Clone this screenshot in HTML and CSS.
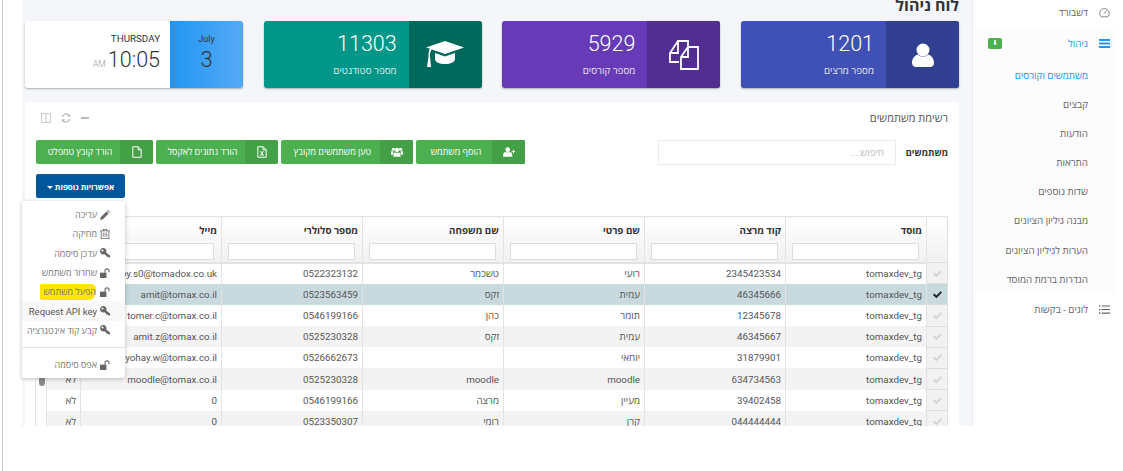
FILE: index.html
```html
<!DOCTYPE html>
<html lang="he" dir="rtl">
<head>
    <meta charset="UTF-8">
    <title>לוח ניהול</title>
    <link rel="stylesheet" href="styles.css">
</head>
<body>
    <svg class="icon-defs" width="0" height="0">
        <symbol id="i-user" viewBox="0 0 24 24"><circle cx="12" cy="7" r="6.5"/><path d="M7 11.500c2.500 3 7.500 3 10 0 3.500 1 6 4 6 8.500 0 2.500-2 4-4 4H5c-2 0-4-1.500-4-4 0-4.500 2.500-7.500 6-8.500z"/></symbol>
        <symbol id="i-copy" viewBox="0 0 30 30"><path d="M10 22H1V13L9 1h10v6M9 1v12H1M12 17l7-10h10v22H12zM19 7v10h-7" fill="none" stroke="currentColor" stroke-width="1.800"/></symbol>
        <symbol id="i-cap" viewBox="0 0 40 27"><path d="M20 0l19 6.500-19 6.500-13-4.500c-1.500 1-2 3-2 5.500v1.500l1 10.500H2l1.500-10.500V14c0-3 .5-5 1.500-6.200L1 6.500z"/><path d="M10 12l10 3.500L30 12v6c0 3-4.500 5-10 5s-10-2-10-5z"/></symbol>
        <symbol id="i-pencil" viewBox="0 0 14 14"><path d="M0 14l1-4 8-8 3 3-8 8zM10 1l1-1 3 3-1 1z"/></symbol>
        <symbol id="i-trash" viewBox="0 0 14 14"><path d="M4.500 0h5l1 2H14v1.200h-1V14H1V3.200H0V2h3.500zM5 2h4l-.4-.8H5.400zM2.200 3.200v9.600h9.600V3.200zM4 5h1v6H4zM6.500 5h1v6h-1zM9 5h1v6H9z"/></symbol>
        <symbol id="i-key" viewBox="0 0 14 14"><path fill-rule="evenodd" d="M4.500 0a4.500 4.500 0 0 1 4.200 6.200L14 10.500V13l-1 .5-1.300-1-.8.500-.9-1.200-.9.200-.4-1.300-2.300-2.100A4.500 4.500 0 1 1 4.500 0zM3.500 2a1.500 1.500 0 1 0 0 3 1.500 1.500 0 0 0 0-3z"/></symbol>
        <symbol id="i-unlock" viewBox="0 0 14 14"><path d="M0 6.500h9V14H0z"/><path d="M7 6.500V4a2.800 2.800 0 0 1 5.600 0v2" fill="none" stroke="currentColor" stroke-width="1.500"/></symbol>
        <symbol id="i-check" viewBox="0 0 14 12"><path d="M1 6.500l1.800-1.800 2.700 2.700L11.200 1.500 13 3.300 5.500 11z"/></symbol>
        <symbol id="i-file" viewBox="0 0 12 14"><path d="M1 .7h6.500L11 4.200v9.100H1zM7.300.7v3.700H11" fill="none" stroke="currentColor" stroke-width="1.200"/></symbol>
        <symbol id="i-excel" viewBox="0 0 12 14"><path d="M1 .7h6.500L11 4.200v9.100H1zM7.300.7v3.700H11" fill="none" stroke="currentColor" stroke-width="1.200"/><path d="M3.500 6h1.600L6 7.500 6.900 6h1.600L6.800 8.500l1.800 3H7L6 9.700l-1 1.800H3.400l1.800-3z"/></symbol>
        <symbol id="i-users" viewBox="0 0 18 14"><circle cx="9" cy="4" r="3.200"/><circle cx="3.500" cy="3" r="2.300"/><circle cx="14.500" cy="3" r="2.300"/><path d="M4.500 8h9l1 6h-11zM0 6h3.500v5H0zM14.500 6H18v5h-3.500z"/></symbol>
        <symbol id="i-user-plus" viewBox="0 0 18 14"><circle cx="7" cy="3.500" r="3.500"/><path d="M2 7.500h10c1.500 1 2 3 2 6.500H0c0-3.500.5-5.500 2-6.500z"/><path d="M13 5.500h2v-2h1.500v2H18V7h-1.500v2H15V7h-2z"/></symbol>
        <symbol id="i-columns" viewBox="0 0 12 12"><path d="M.5.500h11v11H.5zM6 .5v11" fill="none" stroke="currentColor"/></symbol>
        <symbol id="i-refresh" viewBox="0 0 12 12"><path d="M1.500 5a4.500 4.500 0 0 1 8-2M10.500 7a4.500 4.500 0 0 1-8 2" fill="none" stroke="currentColor" stroke-width="1.600"/><path d="M11 .5v4H7zM1 11.500v-4h4z"/></symbol>
        <symbol id="i-gauge" viewBox="0 0 14 14"><path d="M3 12.500a6 6 0 1 1 8 0z" fill="none" stroke="currentColor"/><path d="M6.500 8.500l3-4" fill="none" stroke="currentColor"/></symbol>
        <symbol id="i-bars" viewBox="0 0 12 10"><path d="M0 0h12v2.400H0zM0 3.800h12v2.400H0zM0 7.600h12V10H0z"/></symbol>
        <symbol id="i-list" viewBox="0 0 12 10"><path d="M3 .5h9v1.200H3zM3 4.400h9v1.200H3zM3 8.300h9v1.200H3zM0 .3h1.500v1.500H0zM0 4.200h1.500v1.500H0zM0 8.100h1.500v1.500H0z"/></symbol>
    </svg>

    <div class="page">
        <aside class="sidebar">
            <a class="side-item">
                <svg class="side-icon"><use href="#i-gauge"/></svg>
                <span>דשבורד</span>
            </a>
            <div class="side-group">
                <a class="side-item side-item-open">
                    <svg class="side-icon"><use href="#i-bars"/></svg>
                    <span>ניהול</span>
                    <span class="side-badge">⬇</span>
                </a>
                <a class="sub-item sub-item-active">משתמשים וקורסים</a>
                <a class="sub-item">קבצים</a>
                <a class="sub-item">הודעות</a>
                <a class="sub-item">התראות</a>
                <a class="sub-item">שדות נוספים</a>
                <a class="sub-item">מבנה גיליון הציונים</a>
                <a class="sub-item">הערות לגיליון הציונים</a>
                <a class="sub-item">הגדרות ברמת המוסד</a>
            </div>
            <a class="side-item">
                <svg class="side-icon"><use href="#i-list"/></svg>
                <span>לוגים - בקשות</span>
            </a>
        </aside>

        <main class="content">
            <h1 class="page-title">לוח ניהול</h1>

            <section class="stats">
                <div class="stat stat-indigo">
                    <div class="stat-icon"><svg class="icon-user"><use href="#i-user"/></svg></div>
                    <div class="stat-body">
                        <div class="stat-num">1201</div>
                        <div class="stat-label">מספר מרצים</div>
                    </div>
                </div>
                <div class="stat stat-purple">
                    <div class="stat-icon"><svg class="icon-copy"><use href="#i-copy"/></svg></div>
                    <div class="stat-body">
                        <div class="stat-num">5929</div>
                        <div class="stat-label">מספר קורסים</div>
                    </div>
                </div>
                <div class="stat stat-teal">
                    <div class="stat-icon"><svg class="icon-cap"><use href="#i-cap"/></svg></div>
                    <div class="stat-body">
                        <div class="stat-num">11303</div>
                        <div class="stat-label">מספר סטודנטים</div>
                    </div>
                </div>
                <div class="stat stat-date">
                    <div class="date-box">
                        <div class="date-month">July</div>
                        <div class="date-day">3</div>
                    </div>
                    <div class="date-body">
                        <div class="date-weekday">THURSDAY</div>
                        <div class="date-time"><span class="date-ampm">AM</span> 10:05</div>
                    </div>
                </div>
            </section>

            <section class="panel">
                <div class="panel-head">
                    <span class="panel-title">רשימת משתמשים</span>
                    <div class="panel-tools">
                        <span class="tool-minus"></span>
                        <svg class="tool"><use href="#i-refresh"/></svg>
                        <svg class="tool"><use href="#i-columns"/></svg>
                    </div>
                </div>

                <div class="toolbar">
                    <strong class="toolbar-label">משתמשים</strong>
                    <input class="search" type="text" placeholder="חיפוש ...">
                    <div class="actions">
                        <button class="btn btn-add"><span class="btn-icon"><svg class="icon-wide"><use href="#i-user-plus"/></svg></span><span class="btn-text">הוסף משתמש</span></button>
                        <button class="btn btn-load"><span class="btn-icon"><svg class="icon-wide"><use href="#i-users"/></svg></span><span class="btn-text">טען משתמשים מקובץ</span></button>
                        <button class="btn btn-excel"><span class="btn-icon"><svg class="icon-doc"><use href="#i-excel"/></svg></span><span class="btn-text">הורד נתונים לאקסל</span></button>
                        <button class="btn btn-template"><span class="btn-icon"><svg class="icon-doc"><use href="#i-file"/></svg></span><span class="btn-text">הורד קובץ טמפלט</span></button>
                        <button class="btn-more">אפשרויות נוספות <span class="caret"></span></button>
                    </div>
                </div>

                <div class="grid-wrap">
                    <table class="grid">
                        <colgroup>
                            <col class="col-check">
                            <col class="col-wide">
                            <col class="col-wide">
                            <col class="col-wide">
                            <col class="col-wide">
                            <col class="col-wide">
                            <col class="col-wide">
                            <col class="col-flag">
                            <col class="col-scroll">
                        </colgroup>
                        <thead>
                            <tr>
                                <th class="cell-check"></th>
                                <th>מוסד<input type="text"></th>
                                <th>קוד מרצה<input type="text"></th>
                                <th>שם פרטי<input type="text"></th>
                                <th>שם משפחה<input type="text"></th>
                                <th>מספר סלולרי<input type="text"></th>
                                <th>מייל<input type="text"></th>
                                <th></th>
                                <th class="cell-scroll"></th>
                            </tr>
                        </thead>
                        <tbody>
                            <tr>
                                <td class="cell-check"><svg class="check"><use href="#i-check"/></svg></td>
                                <td>tomaxdev_tg</td><td>2345423534</td><td>רועי</td><td>טשכמר</td><td>0522323132</td><td>roy.s0@tomadox.co.uk</td><td>לא</td><td class="cell-scroll"></td>
                            </tr>
                            <tr class="row-selected">
                                <td class="cell-check"><svg class="check"><use href="#i-check"/></svg></td>
                                <td>tomaxdev_tg</td><td>46345666</td><td>עמית</td><td>זקס</td><td>0523563459</td><td>amit@tomax.co.il</td><td>לא</td><td class="cell-scroll"></td>
                            </tr>
                            <tr>
                                <td class="cell-check"><svg class="check"><use href="#i-check"/></svg></td>
                                <td>tomaxdev_tg</td><td>12345678</td><td>תומר</td><td>כהן</td><td>0546199166</td><td>tomer.c@tomax.co.il</td><td>לא</td><td class="cell-scroll"></td>
                            </tr>
                            <tr class="row-alt">
                                <td class="cell-check"><svg class="check"><use href="#i-check"/></svg></td>
                                <td>tomaxdev_tg</td><td>46345667</td><td>עמית</td><td>זקס</td><td>0525230328</td><td>amit.z@tomax.co.il</td><td>לא</td><td class="cell-scroll"></td>
                            </tr>
                            <tr>
                                <td class="cell-check"><svg class="check"><use href="#i-check"/></svg></td>
                                <td>tomaxdev_tg</td><td>31879901</td><td>יוחאי</td><td></td><td>0526662673</td><td>yohay.w@tomax.co.il</td><td>לא</td><td class="cell-scroll"></td>
                            </tr>
                            <tr class="row-alt">
                                <td class="cell-check"><svg class="check"><use href="#i-check"/></svg></td>
                                <td>tomaxdev_tg</td><td>634734563</td><td>moodle</td><td>moodle</td><td>0525230328</td><td>moodle@tomax.co.il</td><td>לא</td><td class="cell-scroll"></td>
                            </tr>
                            <tr>
                                <td class="cell-check"><svg class="check"><use href="#i-check"/></svg></td>
                                <td>tomaxdev_tg</td><td>39402458</td><td>מעיין</td><td>מרצה</td><td>0546199166</td><td>0</td><td>לא</td><td class="cell-scroll"></td>
                            </tr>
                            <tr class="row-alt">
                                <td class="cell-check"><svg class="check"><use href="#i-check"/></svg></td>
                                <td>tomaxdev_tg</td><td>044444444</td><td>קרן</td><td>רומי</td><td>0523350307</td><td>0</td><td>לא</td><td class="cell-scroll"></td>
                            </tr>
                        </tbody>
                    </table>
                    <span class="scroll-thumb"></span>
                </div>
            </section>
        </main>
    </div>

    <!-- תפריט אפשרויות נוספות -->
    <ul class="menu">
        <li class="menu-item"><svg class="menu-icon"><use href="#i-pencil"/></svg><span>עריכה</span></li>
        <li class="menu-item"><svg class="menu-icon"><use href="#i-trash"/></svg><span>מחיקה</span></li>
        <li class="menu-item"><svg class="menu-icon"><use href="#i-key"/></svg><span>עדכן סיסמה</span></li>
        <li class="menu-item"><svg class="menu-icon"><use href="#i-unlock"/></svg><span>שחרור משתמש</span></li>
        <li class="menu-item"><svg class="menu-icon"><use href="#i-unlock"/></svg><span class="marker">הפעל משתמש</span></li>
        <li class="menu-item menu-item-hover"><svg class="menu-icon"><use href="#i-key"/></svg><span>Request API key</span></li>
        <li class="menu-item"><svg class="menu-icon"><use href="#i-key"/></svg><span>קבע קוד אינטגרציה</span></li>
        <li class="menu-divider"></li>
        <li class="menu-item"><svg class="menu-icon"><use href="#i-unlock"/></svg><span>אפס סיסמה</span></li>
    </ul>
</body>
</html>
```

FILE: styles.css
```css
:root {
    --main-bg: #f4f6fa;
    --text-color: #555;
    --border-color: #e3e3e3;
    --green: #4caf50;
    --green-dark: #43a047;
}
* {
    box-sizing: border-box;
}
html, body {
    margin: 0;
    height: 100%;
    overflow: hidden;
}
body {
    background-color: white;
    color: var(--text-color);
    font-family: Roboto, "Open Sans", "Liberation Sans", sans-serif;
    font-size: 9.800px;
}
svg {
    fill: currentColor;
}
.icon-defs {
    position: absolute;
}
.page {
    display: flex;
    height: 471px;
    margin-left: 2px;
    border-left: 1px solid #c6c6c6;
}

/* sidebar */
.sidebar {
    width: 151px;
    height: 426px;
    flex-shrink: 0;
    border-left: 1px solid #e6e8ee;
    padding: 1px 7px 0 0;
}
.side-item {
    display: flex;
    align-items: center;
    height: 23px;
    padding-right: 6px;
    color: #666;
}
.side-item + .side-group {
    margin-top: 5px;
}
.side-group {
    width: 141px;
    height: 264px;
    background-color: #fcfcfc;
    padding-top: 3px;
    margin-bottom: 5px;
}
.side-item-open {
    color: #2196f3;
}
.side-icon {
    width: 11px;
    height: 11px;
    margin-left: 11px;
}
.side-badge {
    width: 14px;
    height: 11px;
    margin-right: auto;
    margin-left: 13px;
    background-color: var(--green);
    border-radius: 2px;
    color: white;
    font-size: 7px;
    line-height: 11px;
    text-align: center;
}
.sub-item {
    display: block;
    height: 29.100px;
    padding-right: 28px;
    line-height: 29px;
    color: #666;
}
.side-item-open + .sub-item {
    margin-top: 6px;
}
.sub-item-active {
    color: #2196f3;
}

/* content */
.content {
    width: 950px;
    height: 426px;
    overflow: hidden;
    background-color: var(--main-bg);
    padding: 0 13px 0 3px;
}
.page-title {
    height: 21px;
    margin: 0;
    color: #333;
    font-size: 16px;
    font-weight: bold;
    line-height: 12px;
}
.stats {
    display: flex;
    justify-content: space-between;
}
.stat {
    display: flex;
    width: 218px;
    height: 67px;
    border-radius: 3px;
    overflow: hidden;
    color: white;
    box-shadow: 0 1px 2px rgba(0, 0, 0, 0.3);
}
.stat-indigo { background-color: #3f51b5; }
.stat-indigo .stat-icon { background-color: #303f8f; }
.stat-purple { background-color: #673ab7; }
.stat-purple .stat-icon { background-color: #512e90; }
.stat-teal { background-color: #009688; }
.stat-teal .stat-icon { background-color: #00695c; }
.stat-icon {
    display: flex;
    align-items: center;
    justify-content: center;
    width: 73px;
}
.icon-user {
    width: 24px;
    height: 26px;
}
.icon-copy {
    width: 30px;
    height: 30px;
}
.icon-cap {
    width: 40px;
    height: 27px;
}
.stat-body {
    padding: 8px 12px 0 0;
}
.stat-num {
    font-size: 21.500px;
    font-weight: 300;
    line-height: 29px;
}
.stat-label {
    margin-top: 6px;
    line-height: 14px;
    opacity: 0.85;
}
.stat-date {
    background-color: white;
    color: #333;
}
.date-box {
    width: 73px;
    background: linear-gradient(to left, #56a8f5, #2196f3);
    text-align: center;
    padding-top: 11px;
}
.date-month {
    font-size: 9px;
    line-height: 14px;
}
.date-day {
    font-size: 22px;
    font-weight: 300;
    line-height: 28px;
}
.date-body {
    flex: 1;
    padding: 11px 10px 0 0;
    text-align: right;
}
.date-weekday {
    line-height: 14px;
}
.date-time {
    direction: ltr;
    font-size: 21.500px;
    font-weight: 300;
    line-height: 28px;
}
.date-ampm {
    font-size: 8.500px;
    color: #999;
    margin-right: -3px;
}

/* panel */
.panel {
    margin-top: 14px;
    height: 400px;
    background-color: white;
    border-radius: 3px;
    padding: 0 11px;
}
.panel-head {
    display: flex;
    align-items: center;
    justify-content: space-between;
    height: 30px;
    padding: 1px 0 0 5px;
    font-size: 11px;
}
.panel-tools {
    display: flex;
    align-items: center;
    gap: 10px;
    color: #bbb;
}
.tool {
    width: 10px;
    height: 10px;
}
.tool-minus {
    width: 8px;
    height: 2px;
    background-color: #bbb;
}
.toolbar {
    display: flex;
    align-items: flex-start;
    margin-top: 8px;
}
.toolbar-label {
    width: 52px;
    color: #333;
    font-size: 9.200px;
    line-height: 25px;
}
.search {
    width: 238px;
    height: 25px;
    border: 1px solid #e4ecec;
    padding: 0 11px;
    font: inherit;
    background-color: white;
}
.search::placeholder {
    color: #bbb;
}
.actions {
    display: flex;
    flex-wrap: wrap;
    justify-content: flex-end;
    gap: 10px 3px;
    width: 489px;
    margin-right: 133px;
}
.btn {
    display: flex;
    align-items: stretch;
    height: 24px;
    padding: 0;
    border: none;
    border-radius: 2px;
    overflow: hidden;
    background-color: var(--green);
    color: white;
    font: inherit;
    font-size: 9px;
}
.btn-add { width: 109px; }
.btn-load { width: 132px; }
.btn-excel { width: 122px; }
.btn-template { width: 117px; }
.btn-icon {
    display: flex;
    align-items: center;
    justify-content: center;
    width: 33px;
    background-color: var(--green-dark);
}
.btn-text {
    flex: 1;
    padding-left: 4px;
    text-align: center;
    line-height: 24px;
}
.icon-wide {
    width: 12px;
    height: 10px;
}
.icon-doc {
    width: 10px;
    height: 12px;
}
.btn-more {
    width: 89px;
    height: 24px;
    padding: 0;
    border: none;
    border-radius: 2px;
    background-color: #01579b;
    color: white;
    font: inherit;
    font-size: 8px;
    font-weight: bold;
}
.caret {
    display: inline-block;
    border-top: 3px solid white;
    border-left: 3px solid transparent;
    border-right: 3px solid transparent;
    vertical-align: middle;
}

/* table */
.grid-wrap {
    position: relative;
    margin-top: 18px;
}
.grid {
    width: 912px;
    table-layout: fixed;
    border-collapse: collapse;
}
.col-check { width: 21px; }
.col-wide { width: 141px; }
.col-flag { width: 34px; }
.col-scroll { width: 11px; }
.grid th {
    height: 46px;
    padding: 7px 4px 0;
    vertical-align: top;
    background: linear-gradient(#fff, #f0f0f0);
    border: 1px solid var(--border-color);
    border-bottom: 2px solid var(--border-color);
    color: #333;
    font-weight: bold;
    text-align: right;
}
.grid th input {
    display: block;
    width: 127px;
    height: 17px;
    margin: 6px 3px 0 0;
    border: 1px solid #ddd;
    background-color: white;
}
.grid td {
    height: 21.200px;
    padding: 0 4px;
    border-right: 1px solid var(--border-color);
    border-left: 1px solid var(--border-color);
    color: var(--text-color);
    text-align: right;
    white-space: nowrap;
    overflow: hidden;
}
.grid tbody tr {
    background-color: white;
}
.grid tbody .row-alt {
    background-color: #f3f3f3;
}
.grid tbody .row-selected {
    background-color: #c8dade;
}
.grid .cell-check {
    background: #f1f1f1;
    border-bottom: 1px solid #ddd;
    color: #d4d4d4;
    text-align: center;
    padding: 0;
}
.grid th.cell-check {
    background: linear-gradient(#fff, #f0f0f0);
}
.row-selected .cell-check {
    background: #c8dade;
    color: #222;
}
.check {
    display: block;
    width: 11px;
    height: 9px;
    margin: auto;
}
.grid .cell-scroll,
.row-alt .cell-scroll,
.row-selected .cell-scroll {
    background: white;
    padding: 0;
}
.scroll-thumb {
    position: absolute;
    left: 3px;
    top: 161px;
    width: 6px;
    height: 9px;
    border-radius: 0 0 3px 3px;
    background-color: #8a8a8a;
}

/* dropdown */
.menu {
    position: absolute;
    left: 22px;
    top: 201px;
    width: 103px;
    height: 177px;
    margin: 0;
    padding: 4px 0 0;
    list-style: none;
    background-color: white;
    border-radius: 0 0 2px 2px;
    box-shadow: 0 1px 4px rgba(0, 0, 0, 0.25);
    color: #777;
    font-size: 9px;
}
.menu-item {
    display: flex;
    align-items: center;
    height: 19.300px;
    padding-right: 15px;
    white-space: nowrap;
}
.menu-item-hover {
    background-color: #f8f8f8;
    color: #555;
    font-size: 9.500px;
}
.menu-icon {
    width: 10px;
    height: 10px;
    margin-left: 3px;
    flex-shrink: 0;
    color: #666;
}
.marker {
    background-color: #ffe600;
    border-radius: 2px 5px 8px 2px;
    padding: 1px 0 2px 4px;
    margin-right: 1px;
}
.menu-divider {
    height: 1px;
    margin: 7px 0 7px;
    background-color: #e5e5e5;
}
```
